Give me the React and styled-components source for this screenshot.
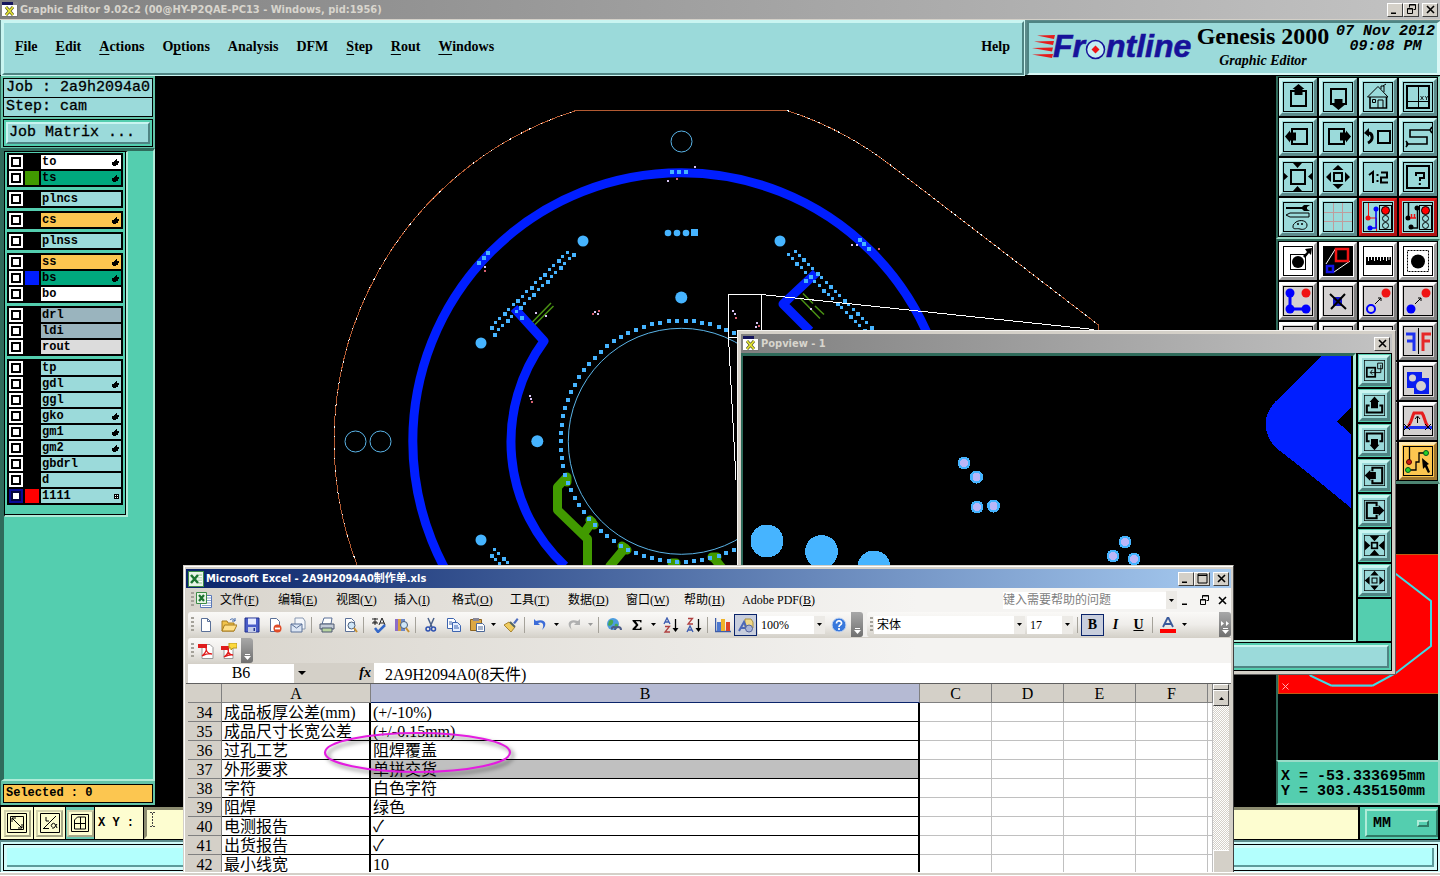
import React from "react";
import styled, { createGlobalStyle, css } from "styled-components";

const aqua = "#9bdada";
const teal = "#54ceaf";
const serif = '"Liberation Serif", "Noto Sans CJK SC", serif';
const mono = '"Liberation Mono", monospace';
const ui = '"DejaVu Sans Condensed", "Noto Sans CJK SC", sans-serif';

const Global = createGlobalStyle`
  *, *::before, *::after { box-sizing: border-box; }
  html, body, #root { height: 100%; }
  body { margin: 0; background: #000; color: #000; overflow: hidden; }
  button, input, select { font: inherit; color: inherit; margin: 0; padding: 0; border-radius: 0; }
  svg { display: block; flex: none; }
`;

const bevel = (light, dark, w) => css`
  border: ${w}px solid;
  border-color: ${light} ${dark} ${dark} ${light};
`;

/* ---------- main frame ---------- */
const Desktop = styled.div`
  position: relative;
  min-height: 100%;
  display: flex;
  flex-direction: column;
  overflow: hidden;
  background: #000;
`;
const TitleBar = styled.div`
  display: flex;
  align-items: center;
  gap: 2px;
  height: 19px;
  padding: 0 2px;
  background: ${(p) => p.$bg || "linear-gradient(90deg, #808080, #c3c3c3)"};
  color: ${(p) => p.$fg || "#d8d5cd"};
  font: bold 11px/18px ${ui};
  white-space: nowrap;
`;
const TitleText = styled.span`
  flex: 1;
`;
const WinButton = styled.button`
  width: 16px;
  height: 14px;
  display: grid;
  place-items: center;
  background: #d4d0c8;
  ${bevel("#fff", "#404040", 1)}
  margin-left: ${(p) => (p.$gap ? 1 : -2)}px;
`;
const Header = styled.header`
  display: flex;
  height: 57px;
  background: #5d8b8b;
  border-bottom: 1px solid #000;
  border-top: 1px solid #d4d0c8;
  padding-top: 1px;
`;
const MenuBar = styled.nav`
  flex: 1;
  display: flex;
  align-items: center;
  gap: 18px;
  margin-left: 2px;
  padding: 0 12px 2px 11px;
  background: ${aqua};
  ${bevel("#c9f5f1", "#4f8483", 2)}
  outline: 1px solid #c9f5f1;
  font: bold 14px/18px ${serif};
`;
const MenuLink = styled.button`
  background: none;
  border: 0;
  margin-left: ${(p) => (p.$last ? "auto" : 0)};
  u { text-underline-offset: 3px; }
`;
const Brand = styled.div`
  display: flex;
  width: 413px;
  margin-left: 3px;
  background: ${aqua};
  border-style: solid;
  border-width: 2px 3px 2px 2px;
  border-color: #4f8483 #d9f8f6 #d9f8f6 #4f8483;
  padding-left: 2px;
`;
const Product = styled.div`
  display: flex;
  flex-direction: column;
  align-items: center;
  width: 142px;
  white-space: nowrap;
  font: bold 24px/26px ${serif};
`;
const ProductSub = styled.span`
  font: italic bold 14px/24px ${serif};
`;
const Clock = styled.div`
  flex: 1;
  padding-top: 1px;
  text-align: center;
  white-space: nowrap;
  font: italic bold 15px/15px ${mono};
`;
const Main = styled.main`
  flex: 1;
  min-height: 0;
  display: flex;
  height: 0;
`;
const Canvas = styled.section`
  flex: 1;
  min-width: 0;
  overflow: hidden;
  background: #000;
`;

/* ---------- left column ---------- */
const Side = styled.aside`
  width: 155px;
  display: flex;
  flex-direction: column;
  border-left: 1px solid #2f6b5b;
  background: #63c3a8;
`;
const JobBlock = styled.div`
  padding: 2px 2px 1px;
  font: 15px/17px ${mono};
  -webkit-text-stroke: 0.3px #000;
`;
const JobField = styled.div`
  height: 20px;
  margin-bottom: -1px;
  border: 1px solid #000;
  background: ${aqua};
  padding: 0 2px;
  white-space: nowrap;
`;
const MatrixFrame = styled.div`
  margin-top: 3px;
  height: 28px;
  border: 1px solid #000;
  background: ${teal};
  padding: 2px;
`;
const MatrixButton = styled.button`
  width: 100%;
  height: 22px;
  text-align: left;
  padding-left: 1px;
  line-height: 16px;
  background: ${aqua};
  ${bevel("#c9f5f1", "#4f8483", 2)}
`;
const LayerPanel = styled.div`
  flex: 1;
  background: ${teal};
  border: solid;
  border-width: 3px 2px 2px 3px;
  border-color: #2f6b5b #aeecd8 #aeecd8 #2f6b5b;
`;
const LayerFrame = styled.div`
  width: 124px;
  padding: 1px 3px 10px 2px;
  border: solid;
  border-width: 1px 2px 2px 1px;
  border-color: #000 #aeecd8 #aeecd8 #000;
  box-shadow: inset -1px -1px 0 #000;
  display: flex;
  flex-direction: column;
  gap: 3px;
`;
const LayerGroup = styled.div`
  background: #000;
  padding: 1px;
`;
const LayerRow = styled.label`
  display: flex;
  align-items: center;
  gap: 2px;
  height: 16px;
  padding: 0 1px;
`;
const Tick = styled.input`
  appearance: none;
  width: 14px;
  height: 14px;
  background: #fff;
  border: 2px solid ${(p) => (p.$active ? "#0a0a96" : "#fff")};
  &::before {
    content: "";
    display: block;
    width: 10px;
    height: 10px;
    border: 2px solid ${(p) => (p.$active ? "#04043c" : "#000")};
  }
`;
const Swatch = styled.span`
  width: 14px;
  height: 14px;
  background: ${(p) => p.$c || "#000"};
`;
const LayerName = styled.span`
  flex: 1;
  height: 14px;
  display: flex;
  align-items: center;
  justify-content: space-between;
  padding: 0 2px 0 1px;
  background: ${(p) => p.$c};
  font: bold 12px/14px ${mono};
`;
const Selected = styled.div`
  margin: 3px 2px 2px;
  height: 19px;
  border: 1px solid #000;
  background: #fcc650;
  padding-left: 2px;
  font: bold 12px/17px ${mono};
`;

/* ---------- right column ---------- */
const ToolSide = styled.aside`
  width: 164px;
  display: flex;
  flex-direction: column;
  background: #000;
`;
const ToolGrid = styled.div`
  display: grid;
  grid-template-columns: repeat(4, 38px);
  gap: 2px;
  padding: 1px 0 1px 1px;
  border: solid;
  border-width: ${(p) => (p.$lower ? "2px 2px 3px" : "1px 2px 2px")};
  border-color: #2f6b5b #9adcc8 ${(p) => (p.$lower ? "#4c8472" : "#9adcc8")} #2f6b5b;
`;
const tones = {
  aqua: [aqua, "#cdf5f2", "#5d8b8b"],
  white: ["#fff", "#fff", "#9c9c9c"],
  gray: ["#d4d0d0", "#fff", "#808080"],
  red: [aqua, "#e81c1c", "#b01414"],
  orange: ["#fcc650", "#ffe9b0", "#a07830"],
};
const ToolButton = styled.button`
  width: 38px;
  height: 38px;
  padding: 1px;
  background: ${(p) => tones[p.$tone][0]};
  ${(p) => bevel(tones[p.$tone][1], tones[p.$tone][2], 3)}
`;
const Overview = styled.div`
  flex: 1;
  min-height: 0;
  overflow: hidden;
  border: solid;
  border-width: 0 2px;
  border-color: #aeecd8 #aeecd8 #aeecd8 #2f6b5b;
`;
const Coords = styled.div`
  height: 45px;
  padding: 7px 3px 0;
  border: solid;
  border-width: 2px;
  border-color: #9adcc8 #9adcc8 #9adcc8 #2f6b5b;
  background: ${teal};
  font: bold 15px/15px ${mono};
  white-space: nowrap;
`;

/* ---------- bottom rows ---------- */
const CommandRow = styled.div`
  position: relative;
  display: flex;
  height: 35px;
  padding: 2px 2px 1px 1px;
  gap: 1px;
`;
const ModeCell = styled.span`
  width: ${(p) => p.$w}px;
  display: grid;
  place-items: center;
  background: ${(p) => p.$bg || "#fdfdd0"};
`;
const ModeButton = styled.button`
  width: 27px;
  height: 27px;
  display: grid;
  place-items: center;
  background: #fdfdd0;
  ${bevel("#d2d2ac", "#a8a888", 2)}
`;
const XYLabel = styled.label`
  width: 48px;
  padding-left: 3px;
  background: #fdfdd0;
  font: bold 12px/32px ${mono};
`;
const CommandInput = styled.input`
  flex: 1;
  min-width: 0;
  padding-left: 4px;
  background: #fdfdd0;
  border: solid;
  border-width: 3px 0 3px 3px;
  border-color: #8c8c70 #fdfdd0 #fdfdd0 #8c8c70;
  outline: none;
  font: 12px/20px ${mono};
`;
const Pointer = styled.svg`
  position: absolute;
  left: 150px;
  top: 7px;
`;
const UnitCell = styled.div`
  width: 78px;
  margin-left: 1px;
  padding: 2px 0 2px 5px;
  background: ${teal};
`;
const UnitBox = styled.label`
  display: flex;
  align-items: center;
  height: 28px;
  padding: 1px 7px 0 6px;
  ${bevel("#aeecd8", "#2f7b66", 2)}
`;
const UnitSelect = styled.select`
  appearance: none;
  flex: 1;
  min-width: 0;
  background: none;
  border: 0;
  outline: none;
  font: bold 15px/20px ${mono};
`;
const UnitMark = styled.span`
  width: 12px;
  height: 7px;
  ${bevel("#aeecd8", "#2f7b66", 2)}
`;
const MessageRow = styled.div`
  height: 32px;
  padding: 2px;
  background: #d2fbfa;
  border-top: 2px solid #5d8b8b;
  border-left: 1px solid #5d8b8b;
`;
const MessageBox = styled.output`
  display: block;
  height: 27px;
  background: #b3fffd;
  border: 1px solid #000;
  box-shadow: inset 3px 3px 0 #d2fbfa, inset -3px -3px 0 #d2fbfa, inset -5px -5px 0 #5d9b9b;
`;
const Edge = styled.div`
  height: 4px;
  background: #d4d0c8;
  border-top: 1px solid #fff;
  border-bottom: 1px solid #fff;
`;

/* ---------- popview window ---------- */
const PopWindow = styled.section`
  position: absolute;
  left: 737px;
  top: 330px;
  width: 659px;
  height: 345px;
  display: flex;
  flex-direction: column;
  padding: 3px;
  background: #d4d0c8;
  ${bevel("#f4f2ee", "#606060", 1)}
`;
const PopBody = styled.div`
  flex: 1;
  min-height: 0;
  display: flex;
  background: #000;
`;
const PopCanvas = styled.div`
  flex: 1;
  min-width: 0;
  overflow: hidden;
  border: solid;
  border-width: 3px 3px 2px 2px;
  border-color: #2f6b5b #aeecd8 #aeecd8 #2f6b5b;
`;
const PopTools = styled.div`
  width: 36px;
  display: flex;
  flex-direction: column;
  gap: 2px;
  padding: 1px 1px 1px 2px;
  &::after {
    content: "";
    flex: 1;
    background: ${teal};
  }
`;
const PopButtonCell = styled.span`
  height: 33px;
  padding: 1px;
  background: ${teal};
`;
const PopButton = styled.button`
  width: 31px;
  height: 31px;
  display: grid;
  place-items: center;
  background: ${aqua};
  ${bevel("#c9f5f1", "#4f8483", 3)}
`;
const PopStatus = styled.div`
  height: 29px;
  padding: 2px;
  border: 1px solid #000;
  background: ${teal};
`;
const PopStatusBar = styled.output`
  display: block;
  height: 23px;
  background: ${aqua};
  ${bevel("#c9f5f1", "#4f8483", 2)}
`;

/* ---------- excel window ---------- */
const ExcelWindow = styled.section`
  position: absolute;
  left: 183px;
  top: 565px;
  width: 1051px;
  height: 307px;
  display: flex;
  flex-direction: column;
  overflow: hidden;
  background: #d4d0c8;
  border: solid;
  border-width: 1px 1px 0;
  border-color: #d4d0c8 #404040 #404040 #d4d0c8;
  box-shadow: inset 1px 1px 0 #fff;
  padding: 3px 2px 0;
  font: 12px/16px ${serif};
`;
const ExcelMenu = styled.nav`
  height: 24px;
  display: flex;
  align-items: center;
  padding-left: 5px;
  background: linear-gradient(90deg, #d8d4cc, #f5f4f2 70%);
`;
const WorkbookButton = styled.button`
  width: 16px;
  height: 16px;
  margin: 0 8px 0 2px;
  background: none;
  border: 0;
`;
const ExcelMenuItem = styled.button`
  width: ${(p) => (p.$wide ? 76 : 58)}px;
  text-align: left;
  background: none;
  border: 0;
  white-space: nowrap;
`;
const Grip = styled.span`
  width: 3px;
  height: 16px;
  background: repeating-linear-gradient(#a5a29a 0 2px, transparent 2px 4px);
`;
const HelpBox = styled.input`
  width: 163px;
  height: 17px;
  margin-left: auto;
  border: 0;
  background: #fff;
  outline: none;
  &::placeholder { color: #808080; opacity: 1; }
`;
const MdiButton = styled.button`
  width: 18px;
  height: 17px;
  display: grid;
  place-items: center;
  background: none;
  border: 0;
`;
const ToolRow = styled.div`
  height: 25px;
  display: flex;
  gap: 4px;
  margin-bottom: ${(p) => (p.$last ? 0 : 1)}px;
  padding-left: 2px;
  background: linear-gradient(90deg, #d8d4cc, #f4f3f1 70%);
`;
const ToolStrip = styled.div`
  display: flex;
  align-items: center;
  flex: ${(p) => (p.$grow ? 1 : "none")};
  padding-left: 3px;
  border-radius: 3px;
  background: linear-gradient(#faf9f7, #efedea 50%, #d5d2ca);
`;
const XlButton = styled.button`
  width: ${(p) => p.$w || 23}px;
  height: 22px;
  display: grid;
  place-items: center;
  background: ${(p) => (p.$on ? "#c8cedd" : "none")};
  border: 1px solid ${(p) => (p.$on ? "#0a246a" : "transparent")};
`;
const Letter = styled.span`
  font: ${(p) => (p.$italic ? "italic " : "")}bold 14px/18px ${serif};
  text-decoration: ${(p) => (p.$line ? "underline" : "none")};
`;
const Sep = styled.i`
  width: 1px;
  height: 16px;
  margin: 0 3px 0 2px;
  background: #a5a29a;
`;
const Overflow = styled.button`
  width: 12px;
  align-self: stretch;
  margin-left: ${(p) => (p.$end ? "auto" : "1px")};
  display: flex;
  flex-direction: column;
  justify-content: flex-end;
  align-items: center;
  gap: 2px;
  padding-bottom: 3px;
  border: 0;
  border-radius: 0 3px 3px 0;
  background: linear-gradient(#a8a8a8, #707070);
`;
const Combo = styled.label`
  width: ${(p) => p.$w}px;
  height: 18px;
  margin: 0 2px 0 ${(p) => p.$ml || 0}px;
  display: flex;
  align-items: center;
  background: #fff;
`;
const ComboSelect = styled.select`
  appearance: none;
  flex: 1;
  min-width: 0;
  padding-left: 3px;
  background: none;
  border: 0;
  outline: none;
`;
const ComboArrow = styled.span`
  width: 11px;
  height: 18px;
  display: grid;
  place-items: center;
  background: #eceae6;
`;
const FormulaRow = styled.div`
  height: 21px;
  display: flex;
  align-items: center;
  padding-left: 2px;
  border-bottom: 1px solid #606060;
  font-size: 16px;
`;
const NameBox = styled.input`
  width: 106px;
  height: 19px;
  border: 0;
  background: #fff;
  text-align: center;
`;
const FxGap = styled.span`
  width: 80px;
  height: 19px;
  display: flex;
  align-items: center;
  justify-content: space-between;
  padding: 0 3px 0 4px;
  font: italic bold 14px/18px ${serif};
`;
const FormulaInput = styled.input`
  flex: 1;
  height: 20px;
  border: 0;
  padding-left: 11px;
  background: #fff;
  outline: none;
`;
const GridArea = styled.div`
  flex: 1;
  min-height: 0;
  display: flex;
  overflow: hidden;
  padding: 0 2px;
`;
const Sheet = styled.table`
  flex: 1;
  width: 100%;
  height: 190px;
  table-layout: fixed;
  border-collapse: separate;
  border-spacing: 0;
  background: #fff;
  font: 16px/17px ${serif};
`;
const Head = styled.th`
  height: 19px;
  padding: 1px 0 0;
  font-weight: normal;
  background: ${(p) => (p.$on ? "#b5bad3" : "#d4d0c8")};
  border-right: 1px solid #808080;
  border-bottom: 1px solid ${(p) => (p.$on ? "#0a246a" : "#808080")};
`;
const Cell = styled.td`
  height: 19px;
  padding: 1px 0 0 2px;
  overflow: hidden;
  white-space: nowrap;
  border: 0 solid ${(p) => (p.$ruled ? "#000" : "#c0c0c0")};
  border-bottom-width: 1px;
  border-right-width: ${(p) => (p.$ruled ? 2 : 1)}px;
  background: ${(p) => (p.$fill ? "#c0c0c0" : "#fff")};
`;
const VScroll = styled.div`
  width: 16px;
  display: flex;
  flex-direction: column;
  background: repeating-conic-gradient(#fff 0 25%, #d4d0c8 0 50%) 0 0 / 2px 2px;
`;
const SplitBar = styled.span`
  height: 6px;
  background: #d4d0c8;
  ${bevel("#fff", "#404040", 1)}
`;
const ScrollButton = styled.button`
  height: 16px;
  display: grid;
  place-items: center;
  background: #d4d0c8;
  ${bevel("#fff", "#404040", 1)}
`;
const Thumb = styled.span`
  height: 22px;
  margin-top: auto;
  background: #d4d0c8;
  border-left: 1px solid #fff;
  border-top: 1px solid #fff;
`;
const Marker = styled.svg`
  position: absolute;
  left: 318px;
  top: 726px;
  filter: drop-shadow(3px 3px 2px rgba(0, 0, 0, 0.5));
`;

/* ---------- small glyphs ---------- */
const Arrow = ({ up, c = "#000" }) => (
  <svg width="5" height="3" viewBox="0 0 5 3"><path d={up ? "M0 3h5L2.500 0z" : "M0 0h5L2.500 3z"} fill={c} /></svg>
);
const glyphs = {
  min: <path d="M1 8.500h5v1.500H1z" fill="#000" />,
  max: <path d="M1 1h9v9H1zM1 2.500h9" fill="none" stroke="#000" />,
  restore: <path d="M3.500 3.500v-3h6v5h-2M3.500 1h6M1.500 4.500h5v5h-5zM1.500 5h5" fill="none" stroke="#000" />,
  close: <path d="M2 2l7 7M9 2l-7 7" stroke="#000" strokeWidth="1.600" />,
};
const Glyph = ({ k }) => <svg width="11" height="11" viewBox="0 0 11 11">{glyphs[k]}</svg>;
const XIcon = () => (
  <svg width="16" height="15" viewBox="0 0 16 15">
    <path d="M0 0h16v15H0z" fill="#fff" /><path d="M0 0h16v3H0z" fill="#14145c" /><path d="M11 0h5v3h-5z" fill="#888" />
    <path d="M4 5l7 8M11 5l-7 8" stroke="#55552a" strokeWidth="3" /><path d="M4 5l7 8M11 5l-7 8" stroke="#e6e632" strokeWidth="1.700" />
    <path d="M0 14.500h16M15.500 3v12" stroke="#777" />
  </svg>
);
const ExcelIcon = () => (
  <svg width="16" height="16" viewBox="0 0 16 16">
    <rect x=".5" y=".5" width="15" height="15" fill="#e8f4e6" stroke="#3c8c46" />
    <path d="M10 3h4v10h-4z" fill="#c0ddbd" /><path d="M10 5.500h4M10 8h4M10 10.500h4" stroke="#fff" />
    <path d="M3 4l7 8M10 4l-7 8" stroke="#1c7430" strokeWidth="2.500" />
  </svg>
);
const WorkbookIcon = () => (
  <svg width="16" height="16" viewBox="0 0 16 16">
    <path d="M4.500 3.500h11v12h-11z" fill="#fff" stroke="#5a78b8" /><path d="M11 6h4M11 8.500h4M6 13.500h9M11 11h4" stroke="#8ca4d0" />
    <path d="M.5.500h10v11H.5z" fill="#e8f4e6" stroke="#3c8c46" /><path d="M3 3l5 6M8 3L3 9" stroke="#1c7430" strokeWidth="2.200" />
  </svg>
);
const Hand = () => <svg width="7" height="7" viewBox="0 0 7 7" shapeRendering="crispEdges"><path d="M0 3h2V2h1V1h1V0h1v2h2v2H6v2H4v1H1V6H0z" /></svg>;

/* ---------- genesis tool drawings, 30 x 30 ---------- */
const Frame = <rect x=".5" y=".5" width="29" height="29" fill="none" stroke="#000" />;
const Light = (
  <>
    <rect x="16.500" y="3.500" width="12" height="24" fill="#9bdada" stroke="#000" />
    <circle cx="22.500" cy="8.500" r="4" fill="#f00" stroke="#000" /><circle cx="22.500" cy="16.500" r="3" fill="none" stroke="#000" /><circle cx="22.500" cy="23.500" r="3" fill="none" stroke="#000" />
  </>
);
const box = (x, y, w) => <rect x={x} y={y} width={w} height={w} fill="none" stroke="#000" strokeWidth="2" />;
const tools = {
  up: <>{box(8, 9, 15)}<path d="M15.500 2l6 5h-2v6h-8V7h-2z" /></>,
  down: <>{box(8, 7, 15)}<path d="M15.500 28l6-5h-2v-6h-8v6h-2z" /></>,
  home: <g fill="none" stroke="#000"><path d="M4.500 15L15 4.500 25 15H4.500M18 7V4h3v6M20 4l3-2M9.500 17.500h3v3h-3zM15 26v-8h5v8" /><path d="M7 15v11h16.500V15" strokeWidth="1.600" /></g>,
  view: <g fill="none" stroke="#000"><rect x="4" y="4" width="22" height="22" strokeWidth="2" /><path d="M15.500 4v22M4 19.500h22" /><path d="M17.500 14l3 4M20.500 14l-3 4M22 14l1.500 2L25 14M23.500 16v2" strokeWidth=".8" /></g>,
  left: <>{box(9, 7, 15)}<path d="M2 14.500l5-6v2h6v8H7v2z" /></>,
  right: <>{box(6, 7, 15)}<path d="M28 14.500l-5-6v2h-6v8h6v2z" /></>,
  back: <>{box(15, 9, 12)}<path d="M5 11c5 0 6 7 0 10" fill="none" stroke="#000" strokeWidth="3" /><path d="M1 11l5-5v9z" /></>,
  snake: <path d="M3 22h21v-7H7V8h20M27 8l2-3M27 8l2 3M5 22l-2-3M5 22l-2 3" fill="none" stroke="#000" strokeWidth="1.600" />,
  zoomIn: <>{box(8, 8, 14)}<path d="M10 1h9l-4.500 5zM10 29h9l-4.500-5zM0 10v9l5-4.500zM30 10v9l-5-4.500z" /></>,
  zoomOut: <>{box(11, 11, 8)}<path d="M9.500 8h11l-5.500-5zM9.500 22h11l-5.500 5zM8 10v10l-5-5zM22 10v10l5-5z" /></>,
  ratio: <path d="M6 13l4-3v11M14.500 12v2M14.500 18v2M18 10.500h6v5h-6v5h7" fill="none" stroke="#000" strokeWidth="2" />,
  help: <><rect x="4" y="4" width="22" height="22" fill="none" stroke="#000" strokeWidth="2" /><path d="M13 14v-3h8v5h-4v3M16.800 21v2" fill="none" stroke="#000" strokeWidth="2" /></>,
  kit: <><path d="M3 5h16l2-2h6l-3 2v2l3 2h-6l-2-2H3z" /><path d="M3 13l4-2h19v4H7z" fill="none" stroke="#000" /><path d="M13 20c5-3 11-1 11 3s-4 5-7 4-7 1-7-2 1-3 3-5z" fill="none" stroke="#000" /><circle cx="15" cy="22" r="1" /><circle cx="19" cy="22" r="1" /></>,
  grid: <path d="M10.500 1v28M19.500 1v28M1 10.500h28M1 19.500h28" stroke="#c09c9c" />,
  netA: <><path d="M5.500 0v16h8v14" fill="none" stroke="#e11" /><circle cx="5" cy="16" r="2.500" fill="#e11" /><path d="M13 6v20H7" fill="none" stroke="#00f" strokeWidth="1.500" /><circle cx="13" cy="7" r="2.500" fill="#00f" /><circle cx="7" cy="26" r="2.500" fill="#00f" />{Light}</>,
  netB: <><path d="M5.500 0v16M14.500 6v20H9" fill="none" stroke="#000" strokeWidth="1.500" /><circle cx="5" cy="16" r="2.500" /><circle cx="14" cy="6" r="2.500" /><circle cx="8" cy="25" r="2.500" /><path d="M7 16h6M8.500 12v4M11.500 12v4" stroke="#e11" strokeWidth="1.500" />{Light}</>,
  move: <><rect x="7.500" y="8.500" width="15" height="15" fill="none" stroke="#000" /><circle cx="15" cy="16" r="6" /><path d="M20 10l4-4-2-3 7-1-1 7-2-2-4 5z" /></>,
  stretch: <><path d="M0 0h30v30H0z" /><path d="M3 18L13 2M11 26l16-11" stroke="#fff" /><rect x="13" y="3" width="12" height="12" fill="none" stroke="#f01414" strokeWidth="2.500" /><rect x="4" y="20" width="6" height="6" fill="none" stroke="#1414e6" strokeWidth="2.500" /></>,
  ruler: <><path d="M3 11v8h25v-8" /><path d="M5.500 11v4M8.500 11v3M11.500 11v4M14.500 11v3M17.500 11v4M20.500 11v3M23.500 11v4M26 11v3" stroke="#fff" /></>,
  area: <><rect x="4.500" y="4.500" width="21" height="21" fill="none" stroke="#000" strokeDasharray="2 1" /><circle cx="15" cy="15.500" r="7" /></>,
  chain: <><path d="M7 7v16h15" stroke="#00f" strokeWidth="3" fill="none" /><circle cx="7" cy="7" r="4.500" fill="#00f" /><circle cx="7" cy="23" r="4.500" fill="#00f" /><circle cx="23" cy="23" r="4.500" fill="#00f" /><circle cx="23" cy="7" r="4.500" fill="#f01414" /></>,
  cross: <><rect x="10" y="11" width="9" height="9" fill="#1414c8" /><path d="M7 8l16 15M22 8L8 23" stroke="#000" strokeWidth="2" /></>,
  linkA: <><circle cx="8" cy="23" r="4" fill="none" stroke="#00f" strokeWidth="2" /><circle cx="23" cy="7" r="4.500" fill="#f01414" /><path d="M12 18l6-6M15 12h3v3" fill="none" stroke="#000" /></>,
  linkB: <><circle cx="8" cy="23" r="4.500" fill="#00f" /><circle cx="23" cy="7" r="4.500" fill="#f01414" /><path d="M12 18l6-6M15 12h3v3" fill="none" stroke="#000" /></>,
  mirror: <><path d="M15.500 2v26" stroke="#000" /><path d="M3 8h8v17M4 15h7" fill="none" stroke="#1e32f0" strokeWidth="3" /><path d="M28 8h-8v17M27 15h-7" fill="none" stroke="#e62828" strokeWidth="3" /></>,
  merge: <><path d="M4 6h15v6h7v16H11v-6H4z" fill="#0a1ef0" /><circle cx="9.500" cy="12" r="3.500" fill="#d4d0d0" /><circle cx="18" cy="20" r="5" fill="#d4d0d0" /></>,
  shape: <><path d="M0 21.500h30" stroke="#1e32f0" strokeWidth="3" /><path d="M5 20c3-2 4-9 6-13h8c3 4 3 11 6 13" fill="none" stroke="#e61e1e" strokeWidth="3" /><path d="M14.500 17v-6M12 13l2.500-3 2.500 3M1 18l6 6M7 18l-6 6M22 18l6 6M28 18l-6 6" fill="none" stroke="#000" /></>,
  pick: <><path d="M6.500 0v16M5 24h8v-8h3V7h7" fill="none" stroke="#000" strokeWidth="1.300" /><circle cx="6" cy="16" r="2.500" fill="#d01c10" stroke="#500" /><circle cx="5" cy="24" r="2.500" fill="#28d228" stroke="#052" /><circle cx="23" cy="7" r="2.500" fill="#28d228" stroke="#052" /><path d="M19 12l7 6-2 1 3 7-2 1-3-6-2 2z" /></>,
  popout: <><rect x="4" y="11" width="12" height="13" fill="none" stroke="#000" strokeWidth="2.500" /><path d="M19.500 4.500h7v8h-7zM24 7v11H9M12 14l-3 4 3 3" fill="none" stroke="#000" strokeWidth="1.300" /></>,
  pUp: <><path d="M8 15H4v10h22V15h-4" fill="none" stroke="#000" strokeWidth="3" /><path d="M15 2l7 8h-2v9H10v-9H8z" /></>,
  pDown: <><path d="M8 16H4V5h22v11h-4" fill="none" stroke="#000" strokeWidth="3" /><path d="M15 29l7-8h-2v-8H10v8H8z" /></>,
  pLeft: <><path d="M12 9V4h14v22H12v-5" fill="none" stroke="#000" strokeWidth="3" /><path d="M1 15l8-8v3h8v10H9v3z" /></>,
  pRight: <><path d="M18 9V4H4v22h14v-5" fill="none" stroke="#000" strokeWidth="3" /><path d="M29 15l-8-8v3h-8v10h8v3z" /></>,
  pIn: <><rect x="11" y="11" width="8" height="8" fill="none" stroke="#000" strokeWidth="2.500" /><path d="M8 1h14l-7 8zM8 29h14l-7-8zM1 8v14l8-7zM29 8v14l-8-7z" /></>,
  pOut: <><rect x="11.500" y="11.500" width="7" height="7" fill="none" stroke="#000" strokeWidth="1.500" /><path d="M9 8h12l-6-7zM9 22h12l-6 7zM8 9v12l-7-6zM22 9v12l7-6z" /></>,
};
const Tool = ({ k, size = 30 }) => (
  <svg width={size} height={size} viewBox="0 0 30 30">{tools[k]}{Frame}</svg>
);

/* ---------- excel toolbar drawings, 16 x 16 ---------- */
const page = "M3.500 1.500h6l3 3v10h-9z";
const xl = {
  new: <><path d={page} fill="#fff" stroke="#5a7098" /><path d="M9.500 1.500v3h3" fill="none" stroke="#5a7098" /></>,
  open: <><path d="M1 4h5l1 2h6v8H1z" fill="#f2c44c" stroke="#a87c1c" /><path d="M3.500 8H16l-3 6H1z" fill="#ffe08a" stroke="#a87c1c" /><path d="M9 3c2-2 4-1 5 1M14 1v3h-3" fill="none" stroke="#3a62a8" /></>,
  save: <><path d="M1 1h14v14H1z" fill="#4a5cc8" stroke="#20308c" /><path d="M4 1.500h8v6H4z" fill="#e8ecff" /><path d="M4 10h8v5H4z" fill="#c4cce8" /><path d="M9.500 11h1.500v3H9.500z" fill="#20308c" /></>,
  perm: <><path d={page} fill="#fff" stroke="#5a7098" /><circle cx="10.500" cy="11.500" r="4" fill="#e04c28" /><path d="M8 11.500h5" stroke="#fff" strokeWidth="1.800" /></>,
  mail: <><path d="M5 1h8l2 3v8H5z" fill="#f4f7fc" stroke="#8898b0" /><path d="M1 7h11v8H1z" fill="#dce6f4" stroke="#5a7098" /><path d="M1 7l5.500 4L12 7" fill="none" stroke="#5a7098" /></>,
  print: <><path d="M5 1h8l-1 6H3z" fill="#fff" stroke="#5a7098" /><path d="M1 7h14v5H1z" fill="#c4ccd8" stroke="#4c5870" /><path d="M3 11h10v4H3z" fill="#b8d4a0" stroke="#4c5870" /></>,
  preview: <><path d={page} fill="#fff" stroke="#5a7098" /><circle cx="9.500" cy="8.500" r="3.500" fill="#cfe6f8" stroke="#4a5c78" /><path d="M12 11l3 4" stroke="#c89030" strokeWidth="2" /></>,
  spell: <><path d="M1 2h6M2 5h4M4 1v7M1 6h6M8 8l3-7 3 7M9 6h4" fill="none" stroke="#222" /><path d="M4 11l3 4 7-7" fill="none" stroke="#3468c8" strokeWidth="2.500" /></>,
  research: <><path d="M1 2h3v12H1z" fill="#8c6cc8" /><path d="M4 2h3v12H4z" fill="#d8a040" /><path d="M7 2h4v12H7z" fill="#6c88c8" /><circle cx="10" cy="8" r="3.500" fill="#cfe6f8" stroke="#4a5c78" /><path d="M12 11l3 4" stroke="#c89030" strokeWidth="2" /></>,
  cut: <><path d="M5 1l4 9M11 1L7 10" stroke="#4a6088" strokeWidth="1.500" /><circle cx="5" cy="12" r="2" fill="none" stroke="#2c50b0" strokeWidth="1.500" /><circle cx="10.500" cy="12" r="2" fill="none" stroke="#2c50b0" strokeWidth="1.500" /></>,
  copy: <><path d="M1.500 1.500h6l2 2v8h-8z" fill="#fff" stroke="#3c64b0" /><path d="M6.500 5.500h5l3 3v6h-8z" fill="#e4eeff" stroke="#3c64b0" /><path d="M8 9h4M8 11h5M3 5h3M3 7h3" stroke="#3c64b0" /></>,
  paste: <><path d="M1.500 2.500h11v11h-11z" fill="#dca844" stroke="#8c6420" /><path d="M4 1h6v3H4z" fill="#889" /><path d="M7.500 6.500h6l2 2v6h-8z" fill="#fff" stroke="#4c6898" /><path d="M9 10h5M9 12h5" stroke="#4c6898" /></>,
  brush: <><path d="M10 6l4-5 1.500 1.500L12 7z" fill="#4c6cc0" /><path d="M1 8l5-3 6 5-4 5z" fill="#f0cc60" stroke="#a88430" /><path d="M7 5l5 5" stroke="#566" strokeWidth="2" /></>,
  undo: <path d="M2 2v6h6L6 6c4-2 7 1 4 7 6-5 4-12-6-9z" fill="#3c6cd8" />,
  redo: <path d="M14 2v6H8l2-2c-4-2-7 1-4 7-6-5-4-12 6-9z" fill="#b0b0b0" />,
  web: <><circle cx="7" cy="7" r="6" fill="#4c9ce0" /><path d="M3 4c3-3 5 0 4 2s-3 4-5 2zM9 7c3-1 4 1 2 4-2 0-3-2-2-4z" fill="#48a850" /><path d="M6 12.500a2 2 0 014-1M9 13a2 2 0 016 0" fill="none" stroke="#4c5c88" strokeWidth="2" /></>,
  sum: <path d="M3.500 3h9v2.500h-1l-.8-1.200H6.800L9.500 8l-3 3.700h4.200l.8-1.500h1V13h-9v-1.200L7 8 3.500 4z" />,
  az: <><path d="M1 7l3-6 3 6M2 5h4" fill="none" stroke="#3c5cb0" strokeWidth="1.300" /><path d="M2 9.500h4.500L2 15h5" fill="none" stroke="#b04040" strokeWidth="1.300" /><path d="M12.500 2v10" stroke="#000" strokeWidth="1.300" /><path d="M12.500 15l-3-4h6z" /></>,
  za: <><path d="M2 1.500h4.500L2 7h5" fill="none" stroke="#b04040" strokeWidth="1.300" /><path d="M1 15l3-6 3 6M2 13h4" fill="none" stroke="#3c5cb0" strokeWidth="1.300" /><path d="M12.500 2v10" stroke="#000" strokeWidth="1.300" /><path d="M12.500 15l-3-4h6z" /></>,
  chart: <><path d="M.5 1v13.500H16" fill="none" stroke="#3c5ca8" strokeWidth="1.500" /><path d="M2 5h4v9H2z" fill="#4c78d0" /><path d="M6 2h4v12H6z" fill="#f0b428" /><path d="M11 5h4v9h-4z" fill="#dc4428" /></>,
  draw: <><path d="M7 2h6l2 3v6H7z" fill="#f0d888" stroke="#a89040" /><path d="M1 14L6 5l4 9M3 11h5" fill="none" stroke="#4c68b8" strokeWidth="2" /><circle cx="11" cy="11.500" r="3.500" fill="#a8b4d8" stroke="#54649c" /></>,
  help: <><circle cx="8" cy="8" r="7" fill="#3878dc" stroke="#c8d8f0" /><path d="M5.500 6.500c0-4 5.500-3 5 0-.5 1.500-2.500 1.500-2.500 3.500M8 11v2" fill="none" stroke="#fff" strokeWidth="1.700" /></>,
  pdf: <><path d="M4 1.500h8l3 3v11H4z" fill="#fff" stroke="#999" /><path d="M0 1h9v4H0z" fill="#e01c1c" /><path d="M4 13c4-3 5-7 4-8 0 4 3 6 6 6-3-1-6 0-10 2z" fill="none" stroke="#e01c1c" strokeWidth="1.300" /></>,
  pdfMail: <><path d="M3 3.500h9v12H3z" fill="#fff" stroke="#999" /><path d="M0 3h8v4H0z" fill="#e01c1c" /><path d="M3 14c4-3 5-6 4-8 0 4 2 6 5 6-3-1-5 0-9 2z" fill="none" stroke="#e01c1c" strokeWidth="1.300" /><path d="M8 0h8v5h-4l-2 2V5H8z" fill="#fcd83c" stroke="#b89820" /></>,
};
const Xl = ({ k, on }) => (
  <XlButton $on={on} aria-label={k}><svg width="16" height="16" viewBox="0 0 16 16">{xl[k]}</svg></XlButton>
);
const Drop = ({ c }) => <XlButton $w={11} aria-label="more options"><Arrow c={c} /></XlButton>;
const OverflowMark = ({ wide }) => (
  <>
    {wide && <svg width="8" height="5" viewBox="0 0 8 5"><path d="M0 0l3 2.500L0 5zM5 0l3 2.500L5 5z" fill="#fff" /></svg>}
    <svg width="7" height="6" viewBox="0 0 7 6"><path d="M1 0h5v1H1zM0 2h7L3.500 6z" fill="#fff" /></svg>
  </>
);

/* ---------- data ---------- */
const W = "#fff", G = "#00a87e", O = "#fcc650", B = "#9ab4be";
const layers = [
  [["to", W, 1], ["ts", G, 1, "#419a00"]],
  [["plncs", aqua]],
  [["cs", O, 1]],
  [["plnss", aqua]],
  [["ss", O, 1], ["bs", G, 1, "#001eff"], ["bo", W]],
  [["drl", B], ["ldi", B], ["rout", "#dcdcdc"]],
  [["tp", aqua], ["gdl", aqua, 1], ["ggl", aqua], ["gko", aqua, 1], ["gm1", aqua, 1], ["gm2", aqua, 1], ["gbdrl", aqua], ["d", aqua], ["1111", aqua, 2, "#f00"]],
];
const menus = [["", "F", "ile"], ["", "E", "dit"], ["", "A", "ctions"], ["O", "p", "tions"], ["Analysis"], ["DFM"], ["", "S", "tep"], ["", "R", "out"], ["", "W", "indows"]];
const upperTools = ["up", "down", "home", "view", "left", "right", "back", "snake", "zoomIn", "zoomOut", "ratio", "help", "kit", "grid", "netA", "netB"];
const lowerTools = ["move", "stretch", "ruler", "area", "chain", "cross", "linkA", "linkB", "", "", "", "mirror", "", "", "", "merge", "", "", "", "shape", "", "", "", "pick"];
const popTools = ["popout", "pUp", "pDown", "pLeft", "pRight", "pIn", "pOut"];
const excelMenus = [["文件", "F"], ["编辑", "E"], ["视图", "V"], ["插入", "I"], ["格式", "O"], ["工具", "T"], ["数据", "D"], ["窗口", "W"], ["帮助", "H"], ["Adobe PDF", "B"]];
const rows = [
  [34, "成品板厚公差(mm)", "(+/-10%)"], [35, "成品尺寸长宽公差", "(+/-0.15mm)"], [36, "过孔工艺", "阻焊覆盖"],
  [37, "外形要求", "单拼交货"], [38, "字符", "白色字符"], [39, "阻焊", "绿色"], [40, "电测报告", "✓"], [41, "出货报告", "✓"], [42, "最小线宽", "10"],
];

/* ---------- board drawing ---------- */
const CX = 681.3, CY = 441.3;
const sky = "#46b4ff";
const run = (x1, y1, x2, y2, n) => Array.from({ length: n }, (_, i) => [x1 + ((x2 - x1) * i) / (n - 1), y1 + ((y2 - y1) * i) / (n - 1)]);
const ring = Array.from({ length: 90 }, (_, i) => {
  const a = (i * 4 * Math.PI) / 180;
  return [CX - 120.5 * Math.cos(a), CY - 120.5 * Math.sin(a)];
});
const pads = [
  ...run(491, 327, 567, 252, 18), ...run(494, 334, 573.5, 254.5, 19),
  ...run(788, 254.5, 864, 330, 18), ...run(795, 251, 871, 327, 18),
  ...run(494, 549.5, 512, 567, 5), ...run(491, 555, 503, 567, 4),
];
const bigPads = [[488, 253], [483.5, 258], [479, 263], [672, 172.3], [679, 172.3], [686, 172.3], [860, 240], [864, 243.5], [869, 249], [522, 318], [806, 281]];
const pins = [[694, 166], [676, 178], [667, 180], [484, 266], [484, 270], [535, 312], [545, 315], [592, 313], [594, 311], [597, 313], [598, 310], [529, 395], [530, 398], [531, 401], [732, 310], [734, 313], [735, 317], [756, 322], [755, 326], [758, 325], [851, 244], [856, 244], [878, 248], [812, 299], [810, 308]];

const Board = () => (
  <svg width="1121" height="729" viewBox="155 76 1121 729" fill="none">
    <g shapeRendering="crispEdges">
      <path d="M357.500 566A346.600 346.600 0 01576 110.500H787A346.600 346.600 0 01893 167L1098.500 325V331" stroke="#b25a32" />
      <path d="M357.500 566A346.600 346.600 0 01576 110.500" stroke="#fff" strokeDasharray="1 8 2 11" />
      <path d="M787 110.500A346.600 346.600 0 01893 167L1098.500 325" stroke="#e8fbff" strokeDasharray="2 5 1 3" />
    </g>
    <circle cx={CX} cy={CY} r="268.500" stroke="#001eff" strokeWidth="9" />
    <path d="M514 308L544 341A170 170 0 00565 566M816 273L783 304L810 331" stroke="#001eff" strokeWidth="9" strokeLinejoin="round" />
    <circle cx={CX} cy={CY} r="113" stroke="#5ab4e8" />
    <g stroke="#5ab4e8"><circle cx="681.500" cy="141.500" r="10.500" /><circle cx="355.500" cy="441.500" r="10.500" /><circle cx="380.500" cy="441.500" r="10.500" /></g>
    <g stroke="#419a00" strokeWidth="9" strokeLinecap="round" strokeLinejoin="round">
      <path d="M566 478L557.500 487V510L587.500 539V570M592 522L584 533M625 548L610 566M672 563H676M714 558L722 568" />
      <path d="M567 477v5M590 520l4 5M622 546l5 4M712 557h5" />
    </g>
    <path d="M532.500 322L551 303M535 324.500L553.500 306M803 293.500L813 303.500M815 306L824 314.500M800 298L820 318.500" stroke="#4a9214" strokeWidth="1.500" />
    <g fill={sky} shapeRendering="crispEdges">
      {ring.map(([x, y], i) => <rect key={i} x={Math.round(x - 2)} y={Math.round(y - 2)} width="4" height="4" />)}
      {bigPads.map(([x, y], i) => <rect key={i} x={Math.round(x - 2)} y={Math.round(y - 2)} width="4" height="4" />)}
      {pads.map(([x, y], i) => <rect key={i} x={Math.round(x - 1.5)} y={Math.round(y - 1.5)} width={i % 3 ? 3 : 4} height={i % 3 ? 3 : 4} />)}
      <rect x="691" y="229" width="7" height="7" />
    </g>
    <g fill={sky}>
      {[[583, 241, 5.5], [481, 343, 5.5], [681.3, 297.5, 6], [537.3, 441.3, 6], [481, 540, 5.5], [780, 241, 5.5], [668, 233, 3.3], [677, 233, 3.3], [686, 233, 3.3]].map(([x, y, r], i) => <circle key={i} cx={x} cy={y} r={r} />)}
    </g>
    {pins.map(([x, y], i) => <rect key={i} x={x} y={y} width="2" height="2" fill={i % 3 === 1 ? "#d86070" : "#d8c4f4"} />)}
    <path d="M761.500 331V294.500H728.500V337.500H737M728.500 337.500L736 480M761.500 294.500L1094 329.500" stroke="#fff" shapeRendering="crispEdges" />
  </svg>
);

const PopDrawing = () => (
  <svg width="609" height="284" viewBox="743 357 609 284" shapeRendering="crispEdges">
    <path d="M1321.500 357L1275 403Q1256 425 1275 448Q1310 475 1351 509V435L1337 422.500L1351 408V357z" fill="#001eff" />
    <g fill={sky}><circle cx="767" cy="542" r="16.500" /><circle cx="821.500" cy="552.500" r="16.500" /><circle cx="874" cy="568" r="16.500" /></g>
    {[[964, 464], [976.5, 478], [977, 508], [993.5, 507], [1125, 543], [1113, 557], [1134, 560]].map(([x, y], i) => (
      <g key={i}><circle cx={x} cy={y} r="6.500" fill={sky} /><circle cx={x} cy={y} r="4" fill="#bab6f8" /></g>
    ))}
  </svg>
);

const Logo = () => (
  <svg width="161" height="48" viewBox="1031 23 161 48">
    <path d="M1037 35.500l18-.5-1 4zM1034 41.500l20-.5-1 4zM1032 48l21-.5-1 4zM1032 54.500l21-.5-1 4z" fill="#e61c1c" />
    <g fill="#17129a" stroke="#17129a" strokeWidth=".6" fontFamily="Liberation Sans" fontWeight="bold" fontStyle="italic" fontSize="32">
      <text x="1053" y="57">Fr</text><text x="1106" y="57">ntline</text>
    </g>
    <circle cx="1095.500" cy="49.500" r="9" fill="#c4eef0" stroke="#17129a" strokeWidth="1.500" />
    <path d="M1095.500 45.500l4 4-4 4-4-4z" fill="#f01414" />
  </svg>
);

export default function App() {
  return (
    <Desktop>
      <Global />
      <TitleBar>
        <XIcon /><TitleText>Graphic Editor 9.02c2 (00@HY-P2QAE-PC13 - Windows, pid:1956)</TitleText>
        <WinButton aria-label="Minimize"><Glyph k="min" /></WinButton>
        <WinButton aria-label="Restore"><Glyph k="restore" /></WinButton>
        <WinButton $gap aria-label="Close"><Glyph k="close" /></WinButton>
      </TitleBar>
      <Header>
        <MenuBar>
          {menus.map(([a, u, b]) => <MenuLink key={a + u + b}>{a}{u && <u>{u}</u>}{b}</MenuLink>)}
          <MenuLink $last>Help</MenuLink>
        </MenuBar>
        <Brand>
          <Logo />
          <Product>Genesis 2000<ProductSub>Graphic Editor</ProductSub></Product>
          <Clock>07 Nov 2012<br />09:08 PM</Clock>
        </Brand>
      </Header>

      <Main>
        <Side>
          <JobBlock>
            <JobField>Job : 2a9h2094a0</JobField>
            <JobField>Step: cam</JobField>
            <MatrixFrame><MatrixButton>Job Matrix ...</MatrixButton></MatrixFrame>
          </JobBlock>
          <LayerPanel>
            <LayerFrame>
              {layers.map((g) => (
                <LayerGroup key={g[0][0]}>
                  {g.map(([n, c, m, sw]) => (
                    <LayerRow key={n}>
                      <Tick type="checkbox" $active={m === 2} />
                      <Swatch $c={sw} />
                      <LayerName $c={c}>
                        {n}
                        {m === 1 && <Hand />}
                        {m === 2 && <svg width="5" height="5" viewBox="0 0 5 5" shapeRendering="crispEdges"><path d="M0 0h5v5H0z" /><path d="M1 1h1v1H1zM3 1h1v1H3zM1 3h1v1H1zM3 3h1v1H3z" fill="#fff" /></svg>}
                      </LayerName>
                    </LayerRow>
                  ))}
                </LayerGroup>
              ))}
            </LayerFrame>
          </LayerPanel>
          <Selected>Selected : 0</Selected>
        </Side>
        <Canvas><Board /></Canvas>
        <ToolSide>
          <ToolGrid>
            {upperTools.map((k) => <ToolButton key={k} aria-label={k} $tone={k.startsWith("net") ? "red" : "aqua"}><Tool k={k} /></ToolButton>)}
          </ToolGrid>
          <ToolGrid $lower>
            {lowerTools.map((k, i) => <ToolButton key={i} aria-label={k || "tool"} $tone={k === "pick" ? "orange" : i < 4 ? "white" : "gray"}><Tool k={k} /></ToolButton>)}
          </ToolGrid>
          <Overview>
            <svg width="160" height="276" viewBox="1278 484 160 276" fill="none">
              <rect x="1278.500" y="554.500" width="160" height="139" fill="#f00" stroke="#c05a14" />
              <path d="M1340 574L1370 560L1396 574L1431 601V646L1396 673L1373 685.500H1331L1311 676L1290 650" stroke="#3cdce6" strokeWidth="2" />
              <path d="M1332 686.500H1372" stroke="#8c8ca0" />
              <path d="M1282.500 683.500l6 6M1288.500 683.500l-6 6" stroke="#ffb4b4" />
            </svg>
          </Overview>
          <Coords>X = -53.333695mm<br />Y = 303.435150mm</Coords>
        </ToolSide>
      </Main>

      <CommandRow>
        <ModeCell $w={32}><ModeButton aria-label="Line mode"><svg width="20" height="20" viewBox="0 0 20 20"><path d="M.5.500h19v19H.5zM3.500 3.500h13v13h-13zM5 5l10 10M5 9V5h4M15 11v4h-4" fill="none" stroke="#000" /></svg></ModeButton></ModeCell>
        <ModeCell $w={31}><ModeButton aria-label="Angle mode"><svg width="20" height="20" viewBox="0 0 20 20"><path d="M.5.500h19v19H.5zM3 16L16 3M3 15.500h6M6 4v4h3M12 14a2 2 0 013-3l2 4M17 11l-3 4h-2" fill="none" stroke="#000" /></svg></ModeButton></ModeCell>
        <ModeCell $w={28} $bg="#6ac8b0"><ModeButton aria-label="Grid mode"><svg width="18" height="18" viewBox="0 0 18 18"><path d="M.5.500h17v17H.5zM3.500 15V6l3-3h8v12zM3 9.500h12M9.500 3v12" fill="none" stroke="#000" /></svg></ModeButton></ModeCell>
        <XYLabel htmlFor="xy">X Y :</XYLabel>
        <CommandInput id="xy" />
        <Pointer width="5" height="15" viewBox="0 0 5 15"><path d="M0 .500h2M3 .500h2M2.500 1v13M0 14.500h2M3 14.500h2" fill="none" stroke="#444" strokeDasharray="2 1" /></Pointer>
        <UnitCell><UnitBox><UnitSelect aria-label="Units"><option>MM</option></UnitSelect><UnitMark /></UnitBox></UnitCell>
      </CommandRow>
      <MessageRow><MessageBox /></MessageRow>
      <Edge />

      <PopWindow>
        <TitleBar>
          <XIcon /><TitleText>Popview - 1</TitleText>
          <WinButton aria-label="Close popview"><Glyph k="close" /></WinButton>
        </TitleBar>
        <PopBody>
          <PopCanvas><PopDrawing /></PopCanvas>
          <PopTools>
            {popTools.map((k) => <PopButtonCell key={k}><PopButton aria-label={k}><Tool k={k} size={21} /></PopButton></PopButtonCell>)}
          </PopTools>
        </PopBody>
        <PopStatus><PopStatusBar /></PopStatus>
      </PopWindow>

      <ExcelWindow>
        <TitleBar $bg="linear-gradient(90deg, #0a246a, #a6caf0)" $fg="#fff">
          <ExcelIcon /><TitleText>Microsoft Excel - 2A9H2094A0制作单.xls</TitleText>
          <WinButton aria-label="Minimize Excel"><Glyph k="min" /></WinButton>
          <WinButton aria-label="Maximize Excel"><Glyph k="max" /></WinButton>
          <WinButton $gap aria-label="Close Excel"><Glyph k="close" /></WinButton>
        </TitleBar>
        <ExcelMenu>
          <Grip /><WorkbookButton aria-label="Workbook"><WorkbookIcon /></WorkbookButton>
          {excelMenus.map(([t, k]) => <ExcelMenuItem key={t} $wide={k === "B"}>{t}(<u>{k}</u>)</ExcelMenuItem>)}
          <HelpBox aria-label="Help" placeholder="键入需要帮助的问题" />
          <ComboArrow><Arrow /></ComboArrow>
          <MdiButton aria-label="Minimize workbook"><Glyph k="min" /></MdiButton>
          <MdiButton aria-label="Restore workbook"><Glyph k="restore" /></MdiButton>
          <MdiButton aria-label="Close workbook"><Glyph k="close" /></MdiButton>
        </ExcelMenu>
        <ToolRow>
          <ToolStrip>
            <Grip />
            <Xl k="new" /><Xl k="open" /><Xl k="save" /><Xl k="perm" /><Xl k="mail" /><Sep />
            <Xl k="print" /><Xl k="preview" /><Sep />
            <Xl k="spell" /><Xl k="research" /><Sep />
            <Xl k="cut" /><Xl k="copy" /><Xl k="paste" /><Drop /><Xl k="brush" /><Sep />
            <Xl k="undo" /><Drop /><Xl k="redo" /><Drop c="#999" /><Sep />
            <Xl k="web" /><Xl k="sum" /><Drop /><Xl k="az" /><Xl k="za" /><Sep />
            <Xl k="chart" /><Xl k="draw" on />
            <Combo $w={67} $ml={1}><ComboSelect aria-label="Zoom"><option>100%</option></ComboSelect><ComboArrow><Arrow /></ComboArrow></Combo>
            <Xl k="help" />
            <Overflow aria-label="Toolbar options"><OverflowMark /></Overflow>
          </ToolStrip>
          <ToolStrip $grow>
            <Grip />
            <Combo $w={151} $ml={1}><ComboSelect aria-label="Font"><option>宋体</option></ComboSelect><ComboArrow><Arrow /></ComboArrow></Combo>
            <Combo $w={46}><ComboSelect aria-label="Font size"><option>17</option></ComboSelect><ComboArrow><Arrow /></ComboArrow></Combo>
            <Sep />
            <XlButton $on aria-label="Bold"><Letter>B</Letter></XlButton>
            <XlButton aria-label="Italic"><Letter $italic>I</Letter></XlButton>
            <XlButton aria-label="Underline"><Letter $line>U</Letter></XlButton>
            <Sep />
            <XlButton aria-label="Font color"><svg width="16" height="16" viewBox="0 0 16 16"><path d="M3 10l4.500-9h1L13 10M5 7h6" fill="none" stroke="#3a5a9c" strokeWidth="1.800" /><path d="M0 12h16v4H0z" fill="#f00" /></svg></XlButton>
            <Drop />
            <Overflow $end aria-label="Formatting options"><OverflowMark wide /></Overflow>
          </ToolStrip>
        </ToolRow>
        <ToolRow $last>
          <ToolStrip>
            <Grip /><Xl k="pdf" /><Xl k="pdfMail" />
            <Overflow aria-label="PDF toolbar options"><OverflowMark /></Overflow>
          </ToolStrip>
        </ToolRow>
        <FormulaRow>
          <NameBox aria-label="Name box" defaultValue="B6" />
          <FxGap><svg width="8" height="5" viewBox="0 0 8 5"><path d="M0 0h8L4 4z" /></svg><span>fx</span></FxGap>
          <FormulaInput aria-label="Formula" defaultValue="2A9H2094A0(8天件)" />
        </FormulaRow>
        <GridArea>
          <Sheet>
            <colgroup><col width="34" /><col width="149" /><col width="549" /><col width="72" /><col width="72" /><col width="72" /><col width="72" /><col /></colgroup>
            <thead><tr>{["", "A", "B", "C", "D", "E", "F", " "].map((h, i) => <Head key={i} $on={h === "B"}>{h}</Head>)}</tr></thead>
            <tbody>
              {rows.map(([n, a, b]) => (
                <tr key={n}>
                  <Head>{n}</Head><Cell $ruled>{a}</Cell><Cell $ruled $fill={n === 37}>{b}</Cell>
                  <Cell /><Cell /><Cell /><Cell /><Cell />
                </tr>
              ))}
            </tbody>
          </Sheet>
          <VScroll><SplitBar /><ScrollButton aria-label="Scroll up"><Arrow up /></ScrollButton><Thumb /></VScroll>
        </GridArea>
      </ExcelWindow>
      <Marker width="204" height="58" viewBox="318 726 204 58" fill="none">
        <ellipse cx="417.500" cy="752.500" rx="92.500" ry="19.500" stroke="#e41ce0" strokeWidth="2.200" />
      </Marker>
    </Desktop>
  );
}
